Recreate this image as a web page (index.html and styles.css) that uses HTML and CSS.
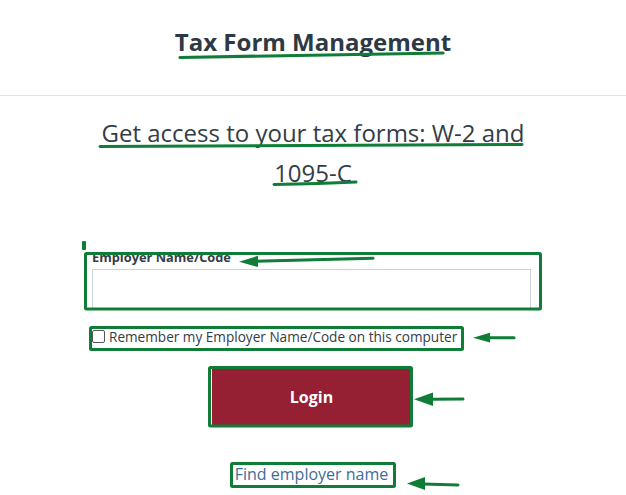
FILE: index.html
```html
<!DOCTYPE html>
<html lang="en">
<head>
<meta charset="utf-8">
<title>Tax Form Management</title>
<link rel="stylesheet" href="styles.css">
</head>
<body>
<header class="site-header">
  <h1 class="site-title">Tax Form Management</h1>
</header>
<main class="content">
  <h2 class="intro">Get access to your tax forms: W-2 and<br>1095-C</h2>
  <form class="login-form">
    <label class="field-label" for="employer">Employer Name/Code</label>
    <input class="field-input" id="employer" type="text">
    <label class="remember">
      <input class="remember-box" type="checkbox">
      <span>Remember my Employer Name/Code on this computer</span>
    </label>
    <button class="login-btn" type="button">Login</button>
    <a class="find-link" href="#">Find employer name</a>
  </form>
</main>
<svg class="annotations" width="626" height="495" viewBox="0 0 626 495" aria-hidden="true">
  <g fill="none" stroke="#0f7d37" stroke-linecap="round" stroke-linejoin="round">
    <path d="M180 57.5 Q310 55 443 53" stroke-width="3.2"/>
    <path d="M100 146.5 Q310 145.5 522 144.5" stroke-width="3"/>
    <path d="M274 184.5 Q320 183.5 356 182" stroke-width="3"/>
    <rect x="85.5" y="253.5" width="455" height="55.5" rx="1" stroke-width="3"/>
    <rect x="90.5" y="327.5" width="372" height="22" rx="1" stroke-width="3"/>
    <rect x="209.5" y="367.5" width="202" height="58.5" rx="1" stroke-width="3"/>
    <rect x="231.5" y="463.5" width="163" height="23" rx="1" stroke-width="3"/>
    <path d="M373 258.3 L255 261.3" stroke-width="3"/>
    <path d="M514 337.7 L488 337.7" stroke-width="3"/>
    <path d="M463 399 L430 399.3" stroke-width="3"/>
    <path d="M458 485 L423 484" stroke-width="3"/>
  </g>
  <g fill="#0f7d37">
    <rect x="82" y="241" width="4" height="9" rx="1"/>
    <polygon points="239,261.7 258,255.8 258,267"/>
    <polygon points="473,337.7 490,332.8 490,342.6"/>
    <polygon points="414,399.3 433,392.5 433,406"/>
    <polygon points="407,483.5 425,477 425,490"/>
  </g>
</svg>
</body>
</html>
```
FILE: styles.css
```css
* {
  box-sizing: border-box;
}

html, body {
  margin: 0;
  padding: 0;
  background: #ffffff;
}

body {
  font-family: "Open Sans", "Noto Sans", "DejaVu Sans", sans-serif;
  color: #333d47;
  width: 626px;
  height: 495px;
  overflow: hidden;
  position: relative;
}

.site-header {
  box-sizing: content-box;
  height: 68px;
  padding-top: 27px;
  border-bottom: 1px solid #e3e3e3;
  text-align: center;
}

.site-title {
  margin: 0;
  font-size: 24px;
  font-weight: 700;
  line-height: 30px;
  color: #2d3944;
}

.content {
  display: flex;
  flex-direction: column;
  align-items: center;
}

.intro {
  margin: 17px 0 0;
  font-size: 24px;
  font-weight: 400;
  line-height: 40px;
  text-align: center;
  color: #333d48;
}

.login-form {
  margin: 55px 0 0 -3px;
  width: 439px;
  display: flex;
  flex-direction: column;
  align-items: center;
}

.field-label {
  align-self: stretch;
  font-size: 12.8px;
  font-weight: 700;
  line-height: 18px;
  color: #333d47;
}

.field-input {
  align-self: stretch;
  margin-top: 3px;
  height: 40px;
  border: 1px solid #cfd3d8;
  border-radius: 0;
  background: #fff;
  font: inherit;
}

.remember {
  align-self: flex-start;
  margin: 18px 0 0 0;
  display: flex;
  align-items: center;
  gap: 4px;
  font-size: 13.6px;
  line-height: 19px;
  color: #333d47;
}

.remember-box {
  margin: 0;
  width: 13px;
  height: 13px;
  appearance: none;
  -webkit-appearance: none;
  border: 1px solid #555;
  border-radius: 2px;
  background: #fff;
}

.login-btn {
  margin-top: 22px;
  width: 200px;
  height: 57px;
  border: none;
  background: #951f33;
  color: #ffffff;
  font-family: inherit;
  font-size: 16px;
  font-weight: 700;
}

.find-link {
  margin-top: 39px;
  font-size: 16px;
  line-height: 21px;
  color: #3d6d98;
  text-decoration: none;
}

.annotations {
  position: absolute;
  left: 0;
  top: 0;
  pointer-events: none;
}
```
